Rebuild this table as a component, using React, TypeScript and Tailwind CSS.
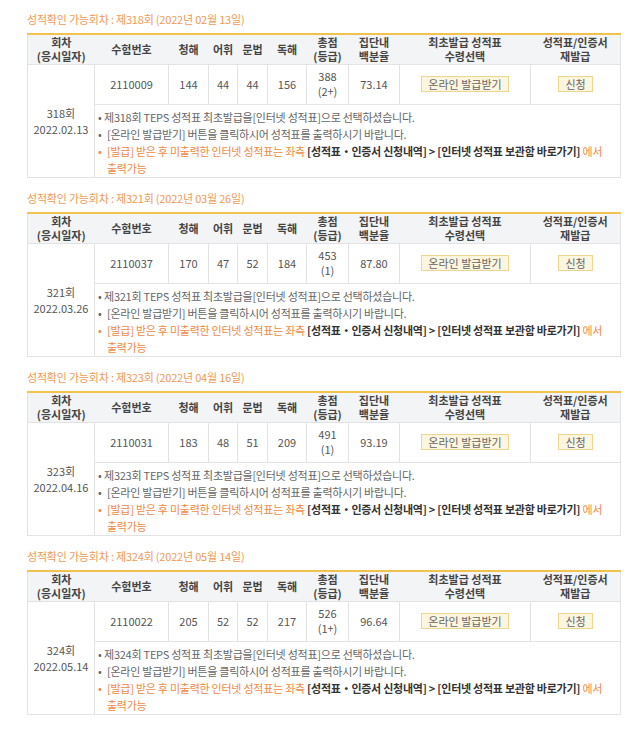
const rounds = [
  { no: 318, title: "제318회 (2022년 02월 13일)", date: "2022.02.13", id: "2110009", l: 144, v: 44, g: 44, r: 156, total: 388, grade: "2+", pct: "73.14" },
  { no: 321, title: "제321회 (2022년 03월 26일)", date: "2022.03.26", id: "2110037", l: 170, v: 47, g: 52, r: 184, total: 453, grade: "1", pct: "87.80" },
  { no: 323, title: "제323회 (2022년 04월 16일)", date: "2022.04.16", id: "2110031", l: 183, v: 48, g: 51, r: 209, total: 491, grade: "1", pct: "93.19" },
  { no: 324, title: "제324회 (2022년 05월 14일)", date: "2022.05.14", id: "2110022", l: 205, v: 52, g: 52, r: 217, total: 526, grade: "1+", pct: "96.64" },
];

const th = "font-semibold text-[#444] text-center align-middle px-0 leading-[14px]";
const td = "border border-[#e3e3e3] text-center align-middle text-[#555]";
const btn = "inline-block h-[16px] px-[6px] leading-[14px] border border-[#efd68e] bg-[#fcf5df] text-[#666]";

function Section({ d }: { d: (typeof rounds)[number] }) {
  return (
    <section className="mb-[13.5px]">
      <h2 className="text-[11px] leading-[14px] tracking-[-0.2px] text-[#ee9a55] ml-[27px]">
        성적확인 가능회차 : {d.title}
      </h2>
      <table className="mt-[7px] ml-[27px] w-[593px] table-fixed border-collapse text-[11px]">
        <colgroup>
          <col className="w-[67px]" />
          <col className="w-[74px]" />
          <col className="w-[40px]" />
          <col className="w-[29px]" />
          <col className="w-[30px]" />
          <col className="w-[39px]" />
          <col className="w-[42px]" />
          <col className="w-[51px]" />
          <col className="w-[131px]" />
          <col className="w-[90px]" />
        </colgroup>
        <thead>
          <tr className="h-[30px] bg-[#f3f4f6] border-t-2 border-t-[#f1c34c] border-x border-x-[#e3e3e3]">
            <th className={th}>회차<br />(응시일자)</th>
            <th className={th}>수험번호</th>
            <th className={th}>청해</th>
            <th className={th}>어휘</th>
            <th className={th}>문법</th>
            <th className={th}>독해</th>
            <th className={th}>총점<br />(등급)</th>
            <th className={th}>집단내<br />백분율</th>
            <th className={th}>최초발급 성적표<br />수령선택</th>
            <th className={th}>성적표/인증서<br />재발급</th>
          </tr>
        </thead>
        <tbody>
          <tr className="h-[40px]">
            <td rowSpan={2} className={`${td} leading-[16px]`}>
              {d.no}회<br />{d.date}
            </td>
            <td className={td}>{d.id}</td>
            <td className={td}>{d.l}</td>
            <td className={td}>{d.v}</td>
            <td className={td}>{d.g}</td>
            <td className={td}>{d.r}</td>
            <td className={`${td} leading-[15px]`}>
              {d.total}<br />({d.grade})
            </td>
            <td className={td}>{d.pct}</td>
            <td className={td}>
              <span className={btn}>온라인 발급받기</span>
            </td>
            <td className={td}>
              <span className={btn}>신청</span>
            </td>
          </tr>
          <tr className="h-[72px]">
            <td colSpan={9} className="border border-[#e3e3e3] align-top pt-[4px] pb-0 pl-[3px] text-left text-[#666] leading-[17px]">
              <p className="flex">
                <span className="w-[6px] shrink-0">•</span>
                <span className="tracking-[-0.25px]">제{d.no}회 TEPS 성적표 최초발급을[인터넷 성적표]으로 선택하셨습니다.</span>
              </p>
              <p className="flex">
                <span className="w-[9px] shrink-0">•</span>
                <span className="tracking-[-0.25px]">[온라인 발급받기] 버튼을 클릭하시어 성적표를 출력하시기 바랍니다.</span>
              </p>
              <p className="flex text-[#ee8a45]">
                <span className="w-[9px] shrink-0">•</span>
                <span className="tracking-[-0.25px]">
                  [발급] 받은 후 미출력한 인터넷 성적표는 좌측{" "}
                  <b className="font-semibold text-[#333]">[성적표‧인증서 신청내역] &gt; [인터넷 성적표 보관함 바로가기]</b> 에서
                  <br />
                  출력가능
                </span>
              </p>
            </td>
          </tr>
        </tbody>
      </table>
    </section>
  );
}

export default function App() {
  return (
    <main className="w-[640px] min-h-[737px] bg-white pt-[12px] font-['Noto_Sans_CJK_KR','Noto_Sans',sans-serif]">
      {rounds.map((d) => (
        <Section key={d.no} d={d} />
      ))}
    </main>
  );
}
